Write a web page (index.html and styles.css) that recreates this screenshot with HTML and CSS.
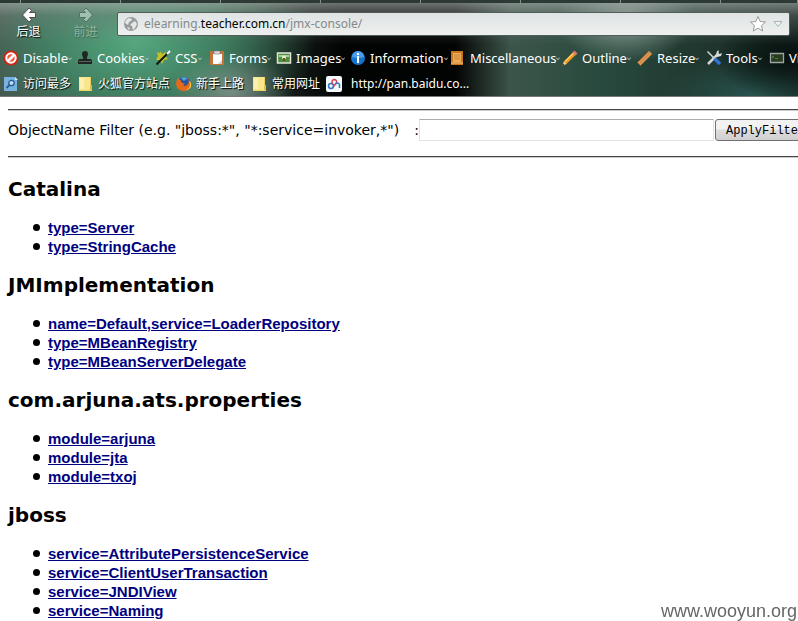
FILE: index.html
```html
<!DOCTYPE html>
<html lang="zh-CN">
<head>
<meta charset="utf-8">
<title>JMX Console</title>
<link rel="stylesheet" href="styles.css">
</head>
<body>
<header class="chrome">
  <div class="tabs"><i></i><i></i><i></i><i></i><i></i><i></i><i></i><i></i><i></i></div>
  <div class="nav">
    <button class="nav-button" type="button">
      <svg width="16" height="16" viewBox="0 0 16 16"><path d="M8 1L1.500 8 8 15l2.500-2.500L8.500 10.500H14.500V5.500H8.500L10.500 3.500z" fill="#fff" stroke="#333" stroke-width=".8"/></svg>
      <span>后退</span>
    </button>
    <button class="nav-button" type="button" disabled>
      <svg width="16" height="16" viewBox="0 0 16 16"><path d="M8 1l6.500 7L8 15l-2.500-2.500 2-2H1.500V5.500H7.500L5.500 3.500z" fill="#9fc2b0" stroke="#4c6558" stroke-width=".8"/></svg>
      <span>前进</span>
    </button>
    <div class="address">
      <svg width="16" height="16" viewBox="0 0 16 16"><circle cx="8" cy="8" r="7" fill="#999c9c"/><path d="M3 4l3-2 3 1-1 2-2 1-1 3-3-2zM9 7l3-2 2 3-2 4-2 2-1-4-2-1zM4 11l3 1-1 2z" fill="#e5e8e8"/></svg>
      <a class="url" href="#">elearning.<b>teacher.com.cn</b>/jmx-console/</a>
      <svg width="18" height="18" viewBox="0 0 18 18"><path d="M9 1.500l2.200 5 5.300.5-4 3.600 1.200 5.400L9 13.200 4.300 16l1.200-5.400-4-3.600 5.300-.5z" fill="#fff" stroke="#999" stroke-linejoin="round"/></svg>
      <svg width="12" height="10" viewBox="0 0 12 10"><path d="M2 2.500h8L6 7.500z" fill="#eef3f5" stroke="#a9b5b9"/></svg>
    </div>
  </div>
  <nav class="tools">
    <button type="button"><svg width="16" height="16" viewBox="0 0 16 16"><circle cx="8" cy="8" r="7.500" fill="#d5220f"/><circle cx="8" cy="8" r="4.700" fill="#f25b42" stroke="#fff" stroke-width="2"/><path d="M4.500 11.500l7-7" stroke="#fff" stroke-width="2.500"/></svg><span>Disable</span><i class="arrow"></i></button>
    <button type="button"><svg width="16" height="16" viewBox="0 0 16 16"><path d="M8 1a3 3 0 0 1 3 3c0 2-1.500 3-1 5h4l1 2v3H1v-3l1-2h4c.5-2-1-3-1-5a3 3 0 0 1 3-3z" fill="#202624"/><path d="M2 11.500h12" stroke="#59615d"/></svg><span>Cookies</span><i class="arrow"></i></button>
    <button type="button"><svg width="16" height="16" viewBox="0 0 16 16"><path d="M5 1l2 3 4-2-1 4 3 3-4 1-2 4-2-4-4 0 2-4-1-4 3 1z" fill="#c5c027"/><path d="M1.500 14.500L14 2" stroke="#151515" stroke-width="2"/><path d="M12 4l3-3" stroke="#fff" stroke-width="2"/></svg><span>CSS</span><i class="arrow"></i></button>
    <button type="button"><svg width="16" height="16" viewBox="0 0 16 16"><rect x="1" y="1" width="14" height="14" rx="1" fill="#c6703a"/><path d="M4 4h9v10H4z" fill="#fff"/><path d="M5 1h6v3H5z" fill="#d9dcdd" stroke="#777" stroke-width=".6"/><path d="M9 14l4-4v4z" fill="#ccd1d3"/></svg><span>Forms</span><i class="arrow"></i></button>
    <button type="button"><svg width="16" height="16" viewBox="0 0 16 16"><path d="M1.500 3h13v10h-13z" fill="#4d8d3b" stroke="#e5e5dc" stroke-width="1.500"/><path d="M3 5h10v2H3z" fill="#a7cf9d"/><circle cx="8" cy="7.500" r="2" fill="#e5efcd"/><path d="M7 8h2v3H7z" fill="#704e20"/></svg><span>Images</span><i class="arrow"></i></button>
    <button type="button"><svg width="16" height="16" viewBox="0 0 16 16"><circle cx="8" cy="8" r="7" fill="#1673cf"/><path d="M2 7a6 6 0 0 1 12 0q-6 2-12 0z" fill="#4b9ee8"/><path d="M7 3h2v2H7zM7 6h2v7H7z" fill="#fff"/></svg><span>Information</span><i class="arrow"></i></button>
    <button type="button"><svg width="16" height="16" viewBox="0 0 16 16"><path d="M1 1h12v14H1z" fill="#c7771e"/><path d="M3 3h8v9H3z" fill="#ecab5a"/><path d="M4 5h6M4 7h6M4 9h6" stroke="#c9822e"/><path d="M1 13h12" stroke="#f3ca8c"/></svg><span>Miscellaneous</span><i class="arrow"></i></button>
    <button type="button"><svg width="16" height="16" viewBox="0 0 16 16"><path d="M.5 15.500l1.500-4 9-9 2.500 2.500-9 9z" fill="#ee9620"/><path d="M3 11.500l9-9" stroke="#ffd35c" stroke-width="1.500"/><path d="M10.500 2.500l2-2 3 3-2 2z" fill="#e0767a"/><path d="M.5 15.500l1.500-4 2.500 2.500z" fill="#f0d5a2"/><path d="M.5 15.500l.5-2 1.500 1.500z" fill="#222"/></svg><span>Outline</span><i class="arrow"></i></button>
    <button type="button"><svg width="16" height="16" viewBox="0 0 16 16"><path d="M.5 12.500L12 1l3 3L3.500 15.500z" fill="#d8954f" stroke="#b5733a" stroke-width=".7"/><path d="M3 10.500l1 1M5 8.500l1 1M7 6.500l1 1M9 4.500l1 1M11 2.500l1 1" stroke="#a9662f" stroke-width=".7"/></svg><span>Resize</span><i class="arrow"></i></button>
    <button type="button"><svg width="16" height="16" viewBox="0 0 16 16"><path d="M2 14l10-10" stroke="#cfd5d8" stroke-width="2.500"/><path d="M10 5l1-4 2-.5-.5 2.500 1 1L16 3l-1 3-4 1z" fill="#d6dbdd"/><path d="M1.500 1.500l7 7" stroke="#d1d5d8" stroke-width="1.500"/><path d="M8.500 8.500l5.500 5.500" stroke="#2e73d2" stroke-width="3.500"/></svg><span>Tools</span><i class="arrow"></i></button>
    <button type="button"><svg width="16" height="16" viewBox="0 0 16 16"><path d="M1.500 3.500h13v9h-13z" fill="#263b20" stroke="#9da4a0" stroke-width="1.300"/><path d="M3 6l2 1-2 1M6 8.500h3" fill="none" stroke="#5c8f43" stroke-width=".8"/></svg><span>View</span></button>
  </nav>
  <nav class="bookmarks">
    <a href="#"><svg width="16" height="16" viewBox="0 0 16 16"><path d="M1 1h11l2 2v12H1z" fill="#78b3df"/><path d="M12 1v3h3" fill="#d2e8f7"/><circle cx="8.500" cy="7" r="2.700" fill="#b9dcf3" stroke="#285b94" stroke-width="1.300"/><path d="M6.500 9L3.500 12" stroke="#285b94" stroke-width="1.800"/></svg><span>访问最多</span></a>
    <a href="#"><svg width="16" height="16" viewBox="0 0 16 16"><path d="M1 1h12v8h1v6H1z" fill="#ecd163"/><path d="M1 1h11v13H1z" fill="#f8e68d"/><path d="M2 2h4v11H2z" fill="#fcf0b0"/><path d="M12 9h2v5h-2z" fill="#dfbd4d"/></svg><span>火狐官方站点</span></a>
    <a href="#"><svg width="16" height="16" viewBox="0 0 16 16"><circle cx="8" cy="8" r="7" fill="#2257a2"/><path d="M5 2q4-2 7 1-3 0-4 2z" fill="#5ca4dc"/><path d="M2 2q1 2 3 2-1 2 2 3l2 1-2 1q2 2 4 0 3-3 1-6 4 3 3 7-2 6-8 5-6-1-7-7 0-3 2-6z" fill="#e66a18"/><path d="M13 5q3 6-3 9 6-1 5-7z" fill="#ffc437"/></svg><span>新手上路</span></a>
    <a href="#"><svg width="16" height="16" viewBox="0 0 16 16"><path d="M1 1h12v8h1v6H1z" fill="#ecd163"/><path d="M1 1h11v13H1z" fill="#f8e68d"/><path d="M2 2h4v11H2z" fill="#fcf0b0"/><path d="M12 9h2v5h-2z" fill="#dfbd4d"/></svg><span>常用网址</span></a>
    <a class="wide" href="#"><svg width="16" height="16" viewBox="0 0 16 16"><rect width="16" height="16" rx="2" fill="#f5f8fc"/><circle cx="5" cy="10" r="2.500" fill="none" stroke="#2876cc" stroke-width="1.500"/><path d="M6.500 8Q5 4 8 3.500q3 0 2.500 3.500L7 11" fill="none" stroke="#d8424e" stroke-width="1.500"/><path d="M9 8.500q3-3 4.500 0V12" fill="none" stroke="#2876cc" stroke-width="1.500"/></svg><span>http://pan.baidu.co...</span></a>
  </nav>
</header>
<main>
  <hr>
  <form class="filter">
    <label for="filter"><span>ObjectName Filter (e.g. "jboss:*", "*:service=invoker,*")</span> <span>:</span></label>
    <input id="filter" type="text">
    <button type="button">ApplyFilter</button>
  </form>
  <hr>
  <div class="domains">
    <h2>Catalina</h2>
    <ul>
      <li><a href="#">type=Server</a></li>
      <li><a href="#">type=StringCache</a></li>
    </ul>
    <h2>JMImplementation</h2>
    <ul>
      <li><a href="#">name=Default,service=LoaderRepository</a></li>
      <li><a href="#">type=MBeanRegistry</a></li>
      <li><a href="#">type=MBeanServerDelegate</a></li>
    </ul>
    <h2>com.arjuna.ats.properties</h2>
    <ul>
      <li><a href="#">module=arjuna</a></li>
      <li><a href="#">module=jta</a></li>
      <li><a href="#">module=txoj</a></li>
    </ul>
    <h2>jboss</h2>
    <ul>
      <li><a href="#">service=AttributePersistenceService</a></li>
      <li><a href="#">service=ClientUserTransaction</a></li>
      <li><a href="#">service=JNDIView</a></li>
      <li><a href="#">service=Naming</a></li>
    </ul>
  </div>
</main>
<div class="watermark">www.wooyun.org</div>
</body>
</html>
```
FILE: styles.css
```css
* { box-sizing: border-box; }
body {
  margin: 0;
  background: #fff;
  color: #000;
  font: 14px/20px "DejaVu Sans", Verdana, sans-serif;
  overflow: hidden;
}
button { font: inherit; color: inherit; }
svg { flex: none; }

.chrome {
  display: flow-root;
  overflow: hidden;
  border-bottom: 1px solid #777;
  color: #fff;
  font: 13px/18px "Noto Sans", "Noto Sans CJK SC", sans-serif;
  background:
    radial-gradient(ellipse 60px 40px at 232px 92px, #a3aaa899 0%, transparent 100%),
    radial-gradient(ellipse 180px 120px at 135px 40px, #55a880 0%, #438b69cc 50%, transparent 100%),
    radial-gradient(ellipse 70px 45px at 625px 18px, #899d94 0%, transparent 100%),
    radial-gradient(ellipse 70px 40px at 785px 58px, #07110f 0%, transparent 100%),
    radial-gradient(ellipse 90px 40px at 750px 96px, #28534e 0%, transparent 100%),
    linear-gradient(90deg, #484b49 0, #39453f 8%, #26382f 28%, #17201c 35%, #020303 43%, #020303 57%, #3c554a 64%, #294a3e 75%, #1e342c 90%, #14231e 100%);
}
.tabs {
  display: grid;
  grid-template-columns: 21px repeat(7, 100px) 1fr;
  height: 3px;
  background: #2d3934;
}
.tabs i { border-right: 1px solid #87938d; }
.nav {
  display: flex;
  height: 42px;
  padding-right: 8px;
  background: linear-gradient(#a4aaa7aa, #7d858166 30%, transparent);
}
.nav-button {
  width: 57px;
  padding: 4px 0 0;
  border: 0;
  background: none;
  display: flex;
  flex-direction: column;
  align-items: center;
  font-size: 12px;
  line-height: 18px;
  text-shadow: 1px 1px 1px #000;
}
.nav-button:disabled { color: #8db39f; text-shadow: 1px 1px 1px #3d6652; }
.address {
  flex: 1;
  display: flex;
  align-items: center;
  gap: 5px;
  height: 24px;
  margin: 9px 0 0 3px;
  padding: 0 5px;
  border: 1px solid #515d58;
  border-radius: 2px;
  background: linear-gradient(#dfe3e3, #edf0ef);
}
.url { flex: 1; color: #858989; font-size: 12px; text-decoration: none; }
.url b { color: #000; font-weight: 400; }

.tools, .bookmarks { display: grid; height: 26px; padding-left: 3px; text-shadow: 1px 1px 1px #000; }
.tools { grid-template-columns: 74px 78px 54px 67px 74px 100px 112px 75px 69px 63px 60px; }
.bookmarks { grid-template-columns: 75px 98px 76px 74px auto; height: 25px; }
.tools button, .bookmarks a {
  display: flex;
  align-items: center;
  gap: 4px;
  padding: 0;
  border: 0;
  background: none;
  color: #fff;
  text-decoration: none;
  white-space: nowrap;
}
.bookmarks a { font-size: 12px; }
.bookmarks .wide { gap: 9px; }
.arrow {
  width: 4px;
  height: 4px;
  margin-left: -4px;
  border: solid #bbc4c0;
  border-width: 0 1px 1px 0;
  transform: rotate(45deg) scale(.7);
}

main { padding: 12px 0 0 8px; }
hr { height: 2px; margin: 0; border: 0; border-top: 1px solid #444; border-bottom: 1px solid #ccc; }
.filter {
  display: flex;
  align-items: center;
  height: 45px;
  padding-bottom: 8px;
  white-space: nowrap;
}
.filter label {
  flex: none;
  display: flex;
  justify-content: space-between;
  min-width: 411px;
}
.filter input {
  flex: none;
  width: 295px;
  height: 22px;
  border: 1px solid #dfe3e8;
  border-top-color: #abadb3;
}
.filter button {
  flex: none;
  height: 22px;
  margin-left: 1px;
  padding: 2px 10px 0;
  border: 1px solid #707070;
  border-radius: 3px;
  background: linear-gradient(#f2f2f2 0 45%, #ddd 50%, #cfcfcf);
  font: 12px/18px "Liberation Mono", monospace;
}
.domains { padding-top: 2px; }
h2 { margin: 0; padding: 16px 0 15px; font-size: 20px; line-height: 27px; }
ul { margin: 0; padding-left: 25px; list-style: none; }
li { display: flex; align-items: center; gap: 8px; font-size: 15px; line-height: 19px; }
li::before { content: ""; width: 7px; height: 7px; border-radius: 50%; background: #000; }
li a { color: #000080; font-family: "Liberation Sans", Arial, sans-serif; font-weight: 700; }
.watermark {
  position: fixed;
  right: 1px;
  bottom: 0;
  color: #666;
  font: 18px/20px "Liberation Sans", sans-serif;
}
```
